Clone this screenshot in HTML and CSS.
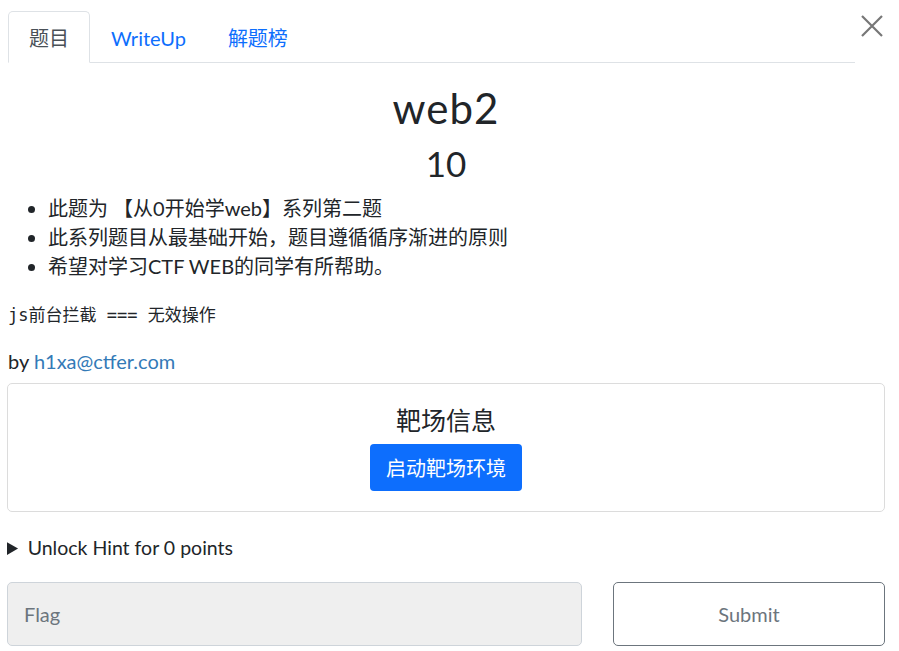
FILE: index.html
```html
<!DOCTYPE html>
<html lang="zh">
<head>
<meta charset="utf-8">
<link rel="stylesheet" href="styles.css">
</head>
<body>
<div class="page">
  <div class="header">
    <ul class="tabs">
      <li class="tab active">题目</li>
      <li class="tab">WriteUp</li>
      <li class="tab">解题榜</li>
    </ul>
    <button class="close" aria-label="close">
      <svg width="22" height="22" viewBox="0 0 22 22"><path d="M1 1 L21 21 M21 1 L1 21" stroke="#777" stroke-width="2.2" fill="none"/></svg>
    </button>
  </div>
  <h1 class="title">web2</h1>
  <h2 class="points">10</h2>
  <ul class="desc">
    <li>此题为 【从0开始学web】系列第二题</li>
    <li>此系列题目从最基础开始，题目遵循循序渐进的原则</li>
    <li>希望对学习CTF WEB的同学有所帮助。</li>
  </ul>
  <p class="code">js前台拦截 === 无效操作</p>
  <p class="by">by <a href="#">h1xa@ctfer.com</a></p>
  <div class="card">
    <div class="card-title">靶场信息</div>
    <button class="start">启动靶场环境</button>
  </div>
  <details class="hint"><summary>Unlock Hint for 0 points</summary></details>
  <div class="submit-row">
    <input class="flag" placeholder="Flag">
    <button class="submit">Submit</button>
  </div>
</div>
</body>
</html>
```
FILE: styles.css
```css
* { box-sizing: border-box; }
body {
  margin: 0;
  font-family: Lato, "Noto Sans CJK SC", sans-serif;
  color: #212529;
  background: #fff;
}
.page {
  padding: 11px 14px 0 7px;
}
.header {
  display: flex;
  align-items: flex-start;
}
.tabs {
  list-style: none;
  margin: 0 0 0 1px;
  padding: 0;
  display: flex;
  flex: 1;
  border-bottom: 1px solid #dee2e6;
  height: 52px;
}
.tab {
  font-size: 20px;
  color: #0d6efd;
  padding: 0 20px;
  height: 52px;
  line-height: 52px;
  border: 1px solid transparent;
  border-top-left-radius: 5px;
  border-top-right-radius: 5px;
}
.tab.active {
  color: #495057;
  border-color: #dee2e6 #dee2e6 #fff;
  background: #fff;
}
.close {
  border: 0;
  background: none;
  padding: 0;
  margin: 4px 0 0 4px;
  width: 26px;
  height: 22px;
  display: flex;
  justify-content: center;
}
.title {
  margin: 20px 0 0;
  text-align: center;
  font-size: 42px;
  font-weight: 400;
  letter-spacing: 1px;
  line-height: 50px;
}
.points {
  margin: 10px 0 0;
  text-align: center;
  font-size: 35px;
  font-weight: 400;
  line-height: 40px;
}
.desc {
  margin: 11px 0 0;
  padding-left: 41px;
  font-size: 20px;
  line-height: 29px;
}
.code {
  margin: 22px 0 0 1px;
  font-family: "DejaVu Sans Mono", "Noto Sans CJK SC", monospace;
  font-size: 17px;
  color: #212529;
  line-height: 24px;
}
.by {
  margin: 20px 0 0 1px;
  font-size: 20px;
  line-height: 28px;
}
.by a {
  color: #337ab7;
  text-decoration: none;
}
.card {
  margin-top: 8px;
  border: 1px solid #dcdcdc;
  border-radius: 5px;
  height: 129px;
  display: flex;
  flex-direction: column;
  align-items: center;
  padding-top: 20px;
}
.card-title {
  font-size: 25px;
  line-height: 32px;
}
.start {
  margin-top: 8px;
  background: #0d6efd;
  color: #fff;
  border: 0;
  border-radius: 4px;
  font-family: Lato, "Noto Sans CJK SC", sans-serif;
  font-size: 20px;
  width: 152px;
  height: 47px;
}
.hint {
  margin-top: 24px;
  font-size: 19.5px;
  line-height: 24px;
}
.hint summary {
  cursor: pointer;
}
.submit-row {
  margin-top: 22px;
  display: flex;
  gap: 31px;
}
.flag {
  flex: 0 0 575px;
  height: 64px;
  background: #efefef;
  border: 1px solid #ced4da;
  border-radius: 5px;
  padding: 0 16px;
  font-family: Lato, sans-serif;
  font-size: 20px;
  color: #495057;
}
.flag::placeholder { color: #6c757d; }
.submit {
  flex: 1;
  height: 64px;
  background: #fff;
  border: 1px solid #6c757d;
  border-radius: 5px;
  font-family: Lato, sans-serif;
  font-size: 20px;
  color: #6c757d;
}
```
